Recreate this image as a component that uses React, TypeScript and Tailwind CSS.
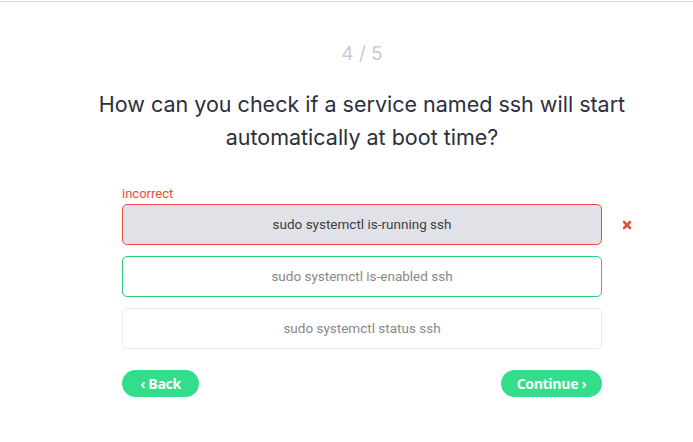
import { X } from 'lucide-react'

const options = [
  { text: 'sudo systemctl is-running ssh', state: 'wrong' },
  { text: 'sudo systemctl is-enabled ssh', state: 'right' },
  { text: 'sudo systemctl status ssh', state: 'idle' },
]

export default function App() {
  return (
    <div className="min-h-[442px] w-full bg-white" style={{ fontFamily: 'Roboto, sans-serif' }}>
      <div className="h-[2px] w-full border-b border-[#d9d9d9]" />
      <div className="flex flex-col items-center pl-[31px]">
        <div className="mt-[38px] text-[19px] leading-[28px] text-[#c7cbd2]" style={{ fontFamily: 'Inter, sans-serif' }}>
          4 / 5
        </div>
        <h1
          className="mt-[20px] w-[560px] text-center text-[21.5px] leading-[33px] font-normal text-[#2b2f3e]"
          style={{ fontFamily: 'Inter, sans-serif' }}
        >
          How can you check if a service named ssh will start automatically at boot time?
        </h1>
        <div className="mt-[32px] w-[480px]">
          <div className="text-[13px] leading-[16px] text-[#e74c3c]">incorrect</div>
          <div className="mt-[2px] flex flex-col gap-[11px]">
            {options.map((o) => (
              <div key={o.text} className="relative">
                <div
                  className={
                    o.state === 'wrong'
                      ? 'flex h-[41px] items-center justify-center rounded-[5px] border border-[#e74c3c] bg-[#e1e2e7] text-[13.5px] text-[#3d3d3d]'
                      : o.state === 'right'
                        ? 'flex h-[41px] items-center justify-center rounded-[5px] border border-[#2ecc71] bg-white text-[13.5px] text-[#888888]'
                        : 'flex h-[41px] items-center justify-center rounded-[5px] border border-[#ececec] bg-white text-[13.5px] text-[#888888]'
                  }
                >
                  {o.text}
                </div>
                {o.state === 'wrong' && (
                  <X
                    className="absolute top-[15px] left-[499px] h-[12px] w-[12px] text-[#e74c3c]"
                    strokeWidth={5}
                  />
                )}
              </div>
            ))}
          </div>
          <div className="mt-[21px] flex justify-between">
            <button
              className="h-[27px] w-[77px] rounded-full bg-[#33dd8b] text-[14px] font-bold text-white"
              style={{ fontFamily: '"Open Sans", sans-serif', letterSpacing: '-0.3px' }}
            >
              ‹ Back
            </button>
            <button
              className="h-[27px] w-[101px] rounded-full bg-[#33dd8b] text-[14px] font-bold text-white"
              style={{ fontFamily: '"Open Sans", sans-serif', letterSpacing: '-0.3px' }}
            >
              Continue ›
            </button>
          </div>
        </div>
      </div>
    </div>
  )
}
